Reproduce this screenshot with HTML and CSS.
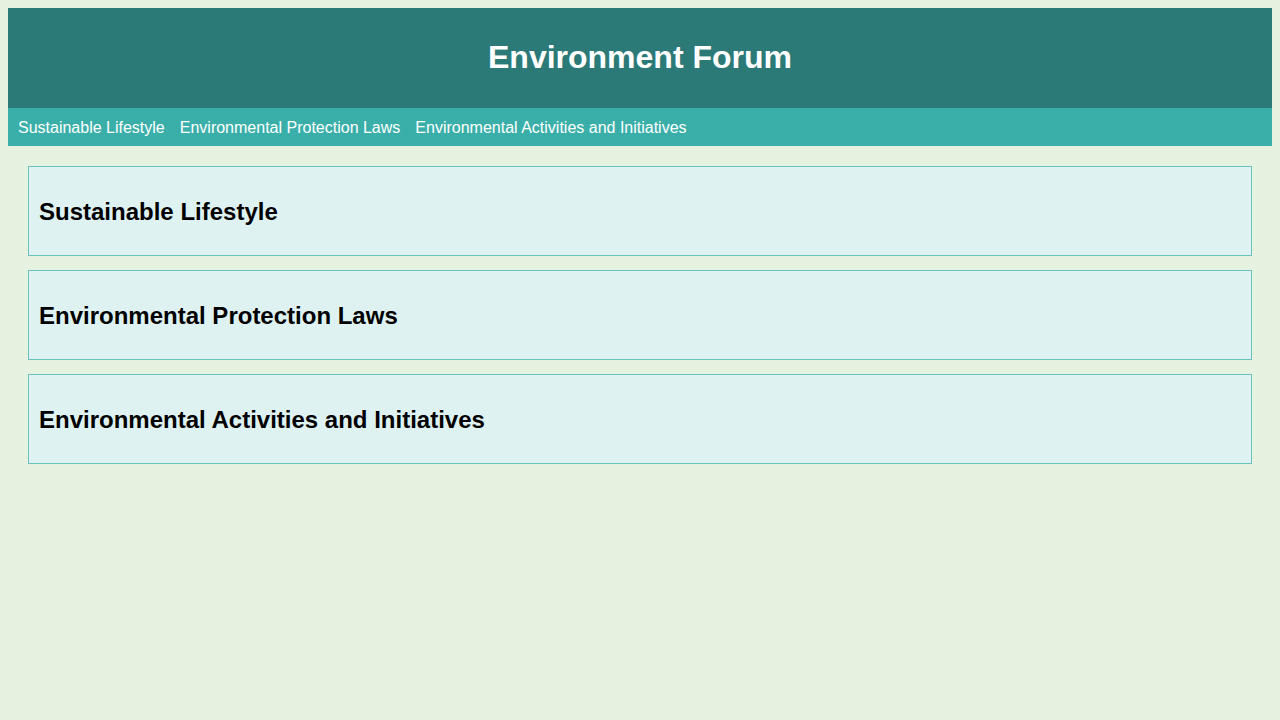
FILE: index.html
```html
<!DOCTYPE html>
<html lang="en">
<head>
<meta charset="utf-8">
<title>Environment Forum</title>
<link rel="stylesheet" href="styles.css">
</head>
<body>
<header class="site-header">
  <h1 class="site-title">Environment Forum</h1>
</header>
<nav class="site-nav">
  <a class="nav-link" href="#lifestyle">Sustainable Lifestyle</a>
  <a class="nav-link" href="#laws">Environmental Protection Laws</a>
  <a class="nav-link" href="#activities">Environmental Activities and Initiatives</a>
</nav>
<main class="content">
  <section class="topic" id="lifestyle">
    <h2 class="topic-title">Sustainable Lifestyle</h2>
  </section>
  <section class="topic" id="laws">
    <h2 class="topic-title">Environmental Protection Laws</h2>
  </section>
  <section class="topic" id="activities">
    <h2 class="topic-title">Environmental Activities and Initiatives</h2>
  </section>
</main>
</body>
</html>
```
FILE: styles.css
```css
html {
  background: #e6f1df;
}
body {
  margin: 8px;
  font-family: "Liberation Sans", Arial, sans-serif;
  background: #e6f1df;
  color: #000;
}
.site-header {
  background: #2b7a78;
  padding: 30px 0 32px;
  text-align: center;
}
.site-title {
  margin: 0;
  font-size: 32px;
  line-height: 38px;
  font-weight: bold;
  color: #ffffff;
}
.site-nav {
  background: #3aafa9;
  padding: 11px 10px 9px;
  display: flex;
  gap: 15px;
}
.nav-link {
  color: #ffffff;
  text-decoration: none;
  font-size: 16px;
  line-height: 18px;
}
.content {
  padding: 20px;
  display: flex;
  flex-direction: column;
  gap: 14px;
}
.topic {
  background: #def2f1;
  border: 1px solid #6cc3bd;
  padding: 10px;
}
.topic-title {
  margin: 21px 0 19px;
  font-size: 24px;
  line-height: 28px;
  font-weight: bold;
}
```
